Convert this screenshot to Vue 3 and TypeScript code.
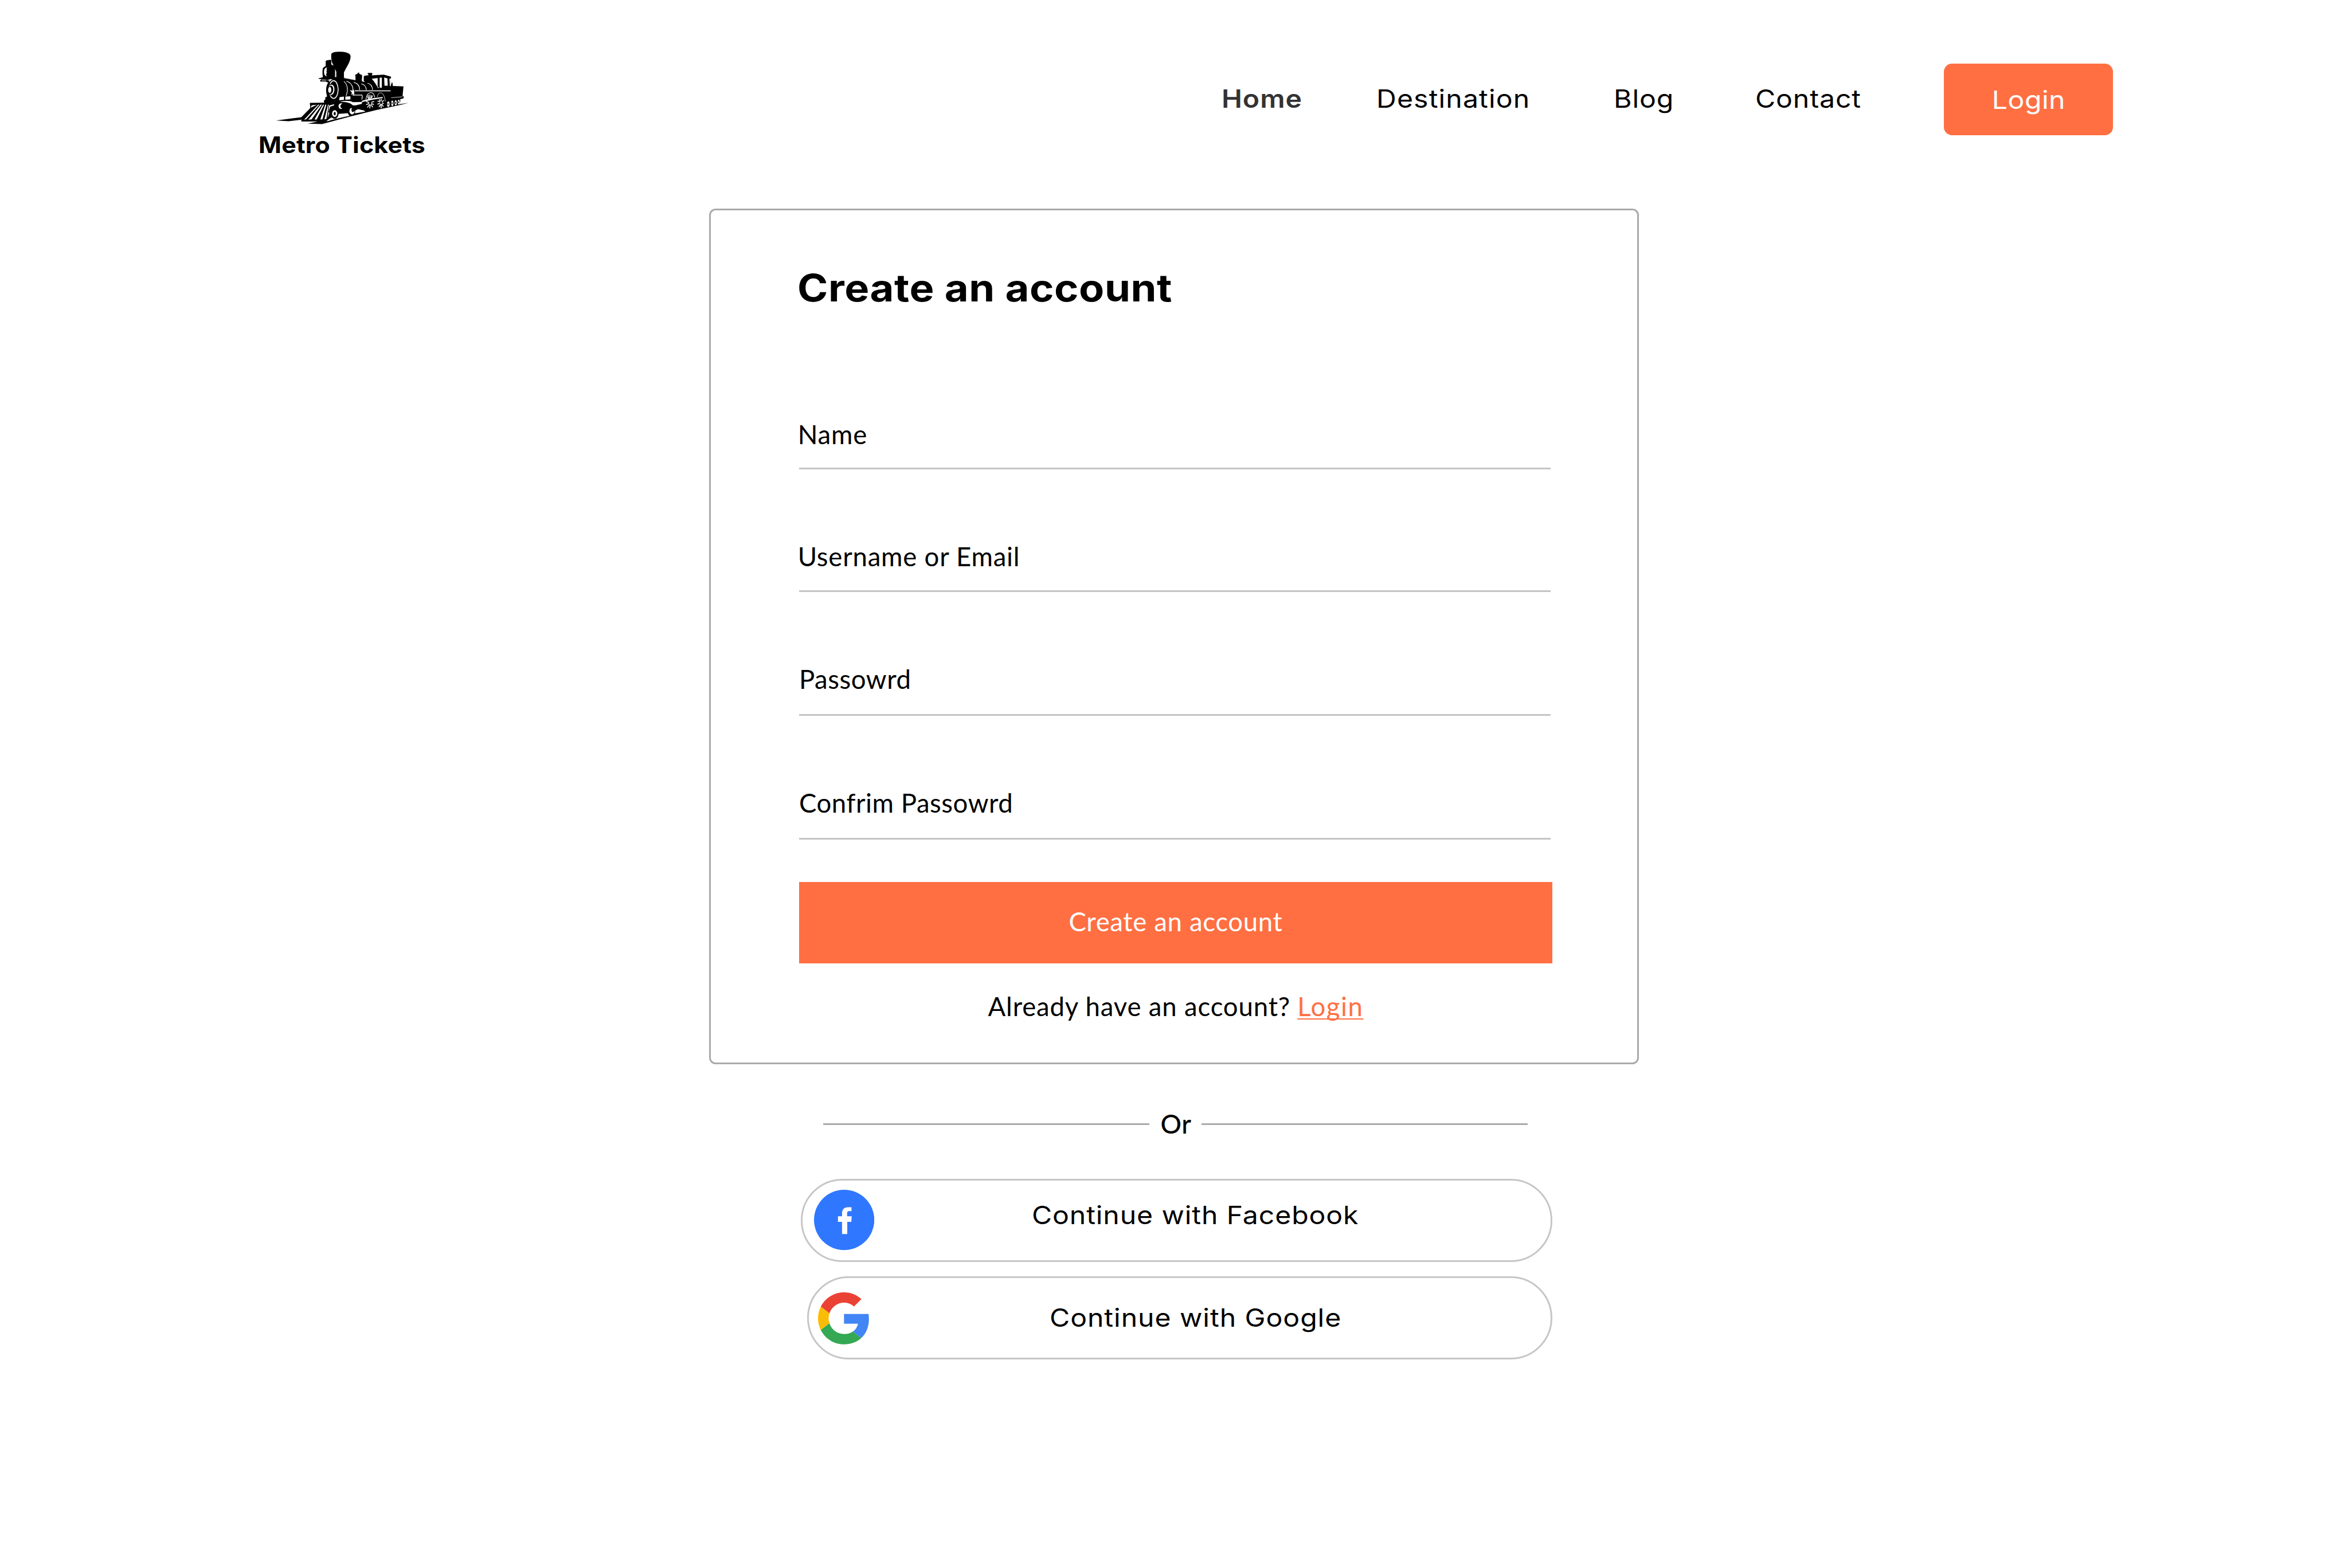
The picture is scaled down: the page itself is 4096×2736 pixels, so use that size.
<script setup lang="ts">
interface Field {
  id: string
  label: string
}

const links: string[] = ['Home', 'Destination', 'Blog', 'Contact']

const fields: Field[] = [
  { id: 'name', label: 'Name' },
  { id: 'username', label: 'Username or Email' },
  { id: 'password', label: 'Passowrd' },
  { id: 'confirm', label: 'Confrim Passowrd' },
]
</script>

<template>
  <div class="page">
    <header class="header">
      <div class="brand">
        <svg class="train" viewBox="140 40 745 415" aria-hidden="true">
          <!-- rails -->
          <path d="M145 428L292 409L284 424L215 432Z" />
          <path d="M320 446L380 433L430 432L640 372L760 350L880 330L835 342L700 370L560 405L400 448Z" />
          <!-- smokestack -->
          <path d="M451 62C452 51 470 47 503 47C540 48 557 58 558 72C558 96 548 112 526 152L521 162V195H478V156L455 106C451 92 450 76 451 62Z" />
          <!-- headlamp -->
          <path d="M420 99L426 95L448 92L451 96V118L462 123L472 132V190L404 194L402 160L404 138L420 126Z" />
          <path d="M474 155L478 158V190H474Z" fill="#fff" />
          <path d="M429 136C416 133 411 146 411 160C411 174 417 185 428 182C421 178 420 171 427 165C423 160 424 153 427 149C423 144 424 139 429 136Z" fill="#fff" />
          <path d="M381 194L402 189L480 188V200H440L438 220L420 212L390 212V204L396 202V199L381 197Z" />
          <path d="M398 202L424 203V206L398 206ZM430 203H440V206H430Z" fill="#fff" />
          <!-- boiler -->
          <path d="M470 190H521L585 203V180L582 178L588 172L596 170L598 163H605L607 170L619 175L622 180L620 209L634 212L631 208V184L637 180L657 177V173L653 171V165H678V172L675 178L742 174L782 185V194L778 196L781 236L786 218L790 219L792 237L851 239L846 292L852 295V305L832 311C836 322 832 337 824 341L700 365L660 380L640 374L600 366L585 372L580 395L560 404L545 398L543 388L490 392L480 412L466 419L452 412L440 420L430 334H412L410 318L418 312V300L428 295C418 262 422 232 436 216Z" />
          <!-- boiler front -->
          <ellipse cx="464" cy="257" rx="25" ry="49" fill="none" stroke="#fff" stroke-width="5" />
          <ellipse cx="451" cy="257" rx="19" ry="33" />
          <path d="M436 241C444 224 465 226 468 249C471 275 455 297 438 281C450 286 462 275 462 255C461 236 450 229 436 241Z" fill="#fff" />
          <path d="M436 247C445 235 451 246 451 258C451 271 444 281 436 271C433 264 433 254 436 247Z" fill="#fff" />
          <!-- boiler bands -->
          <g fill="none" stroke="#fff" stroke-width="3.6">
            <path d="M521 212C541 228 546 258 533 292" />
            <path d="M535 211C562 219 573 240 571 262" />
            <path d="M575 217C597 221 608 238 608 259" />
            <path d="M617 225C635 228 644 242 645 259" />
            <path d="M652 222C671 226 679 240 680 259" />
            <path d="M581 264H780" stroke-width="4.5" />
          </g>
          <path d="M521 190L585 202V205L521 193ZM622 209L635 212V215L622 212Z" fill="#fff" />
          <path d="M553 261L568 262L572 256L578 263V292L571 281L562 287L565 273Z" fill="#fff" />
          <!-- cab windows -->
          <path d="M675 197L706 193L708 194V239L716 248H710C702 232 691 214 675 197ZM719 192L731 190V247L719 246ZM744 190L762 195L764 235H746Z" fill="#fff" />
          <path d="M770 198L778 196L781 238H772Z" fill="#fff" />
          <path d="M768 196L773 197L776 243H768Z" />
          <!-- front beam and cylinders -->
          <path d="M497 299L521 296V314L495 316ZM529 296L557 294V312L529 313Z" fill="#fff" />
          <path d="M500 327C512 318 558 316 570 327L617 326L624 318L668 307L735 298L737 304L680 313L622 326L620 336L584 345L570 344C558 329 523 323 500 327Z" fill="#fff" />
          <path d="M568 287H621C626 295 622 302 620 311" fill="none" stroke="#fff" stroke-width="4" />
          <path d="M513 334C496 330 491 342 491 350C492 361 500 367 512 363C498 356 498 342 513 334Z" fill="#fff" />
          <!-- driving wheels -->
          <g fill="none" stroke="#fff">
            <path d="M643 312C650 263 687 262 692 301" stroke-width="3.5" />
            <path d="M706 298C711 263 745 264 750 323" stroke-width="2.5" />
            <path d="M665 308V284M658 309L650 294M674 304L680 290M670 306L674 287M661 308L656 287" stroke-width="4" />
            <path d="M661 330L644 322M661 335L644 340M664 339L651 356M667 341L664 361M671 339L681 355M672 334L687 340M672 328L688 323" stroke-width="5" />
            <path d="M722 327L707 320M722 333L707 338M725 338L715 354M728 338L727 361M731 336L739 352M732 330L742 335M732 325L742 317M727 321L728 309M722 322L716 311" stroke-width="5" />
            <path d="M783 302L846 297" stroke-width="2.5" />
          </g>
          <!-- tender wheels -->
          <g fill="#fff">
            <ellipse cx="767" cy="338" rx="7" ry="15" />
            <ellipse cx="789" cy="333" rx="6" ry="15" />
            <ellipse cx="808" cy="330" rx="6" ry="14" />
            <ellipse cx="825" cy="327" rx="6" ry="13" />
          </g>
          <ellipse cx="766" cy="338" rx="2.5" ry="6" />
          <ellipse cx="788" cy="333" rx="2.5" ry="6" />
          <ellipse cx="807" cy="330" rx="2.5" ry="6" />
          <ellipse cx="824" cy="327" rx="2.5" ry="6" />
          <!-- pilot -->
          <path d="M332 331L440 329L480 336L462 362L440 420L422 434H285V410L334 360V350Z" />
          <path d="M342 344L372 341L338 357V350L342 349Z" fill="#fff" />
          <path d="M379 340L385 341L312 421L300 424ZM392 340L399 341L342 422L324 424ZM405 340L411 341L370 423L358 423ZM418 340L424 341L402 422L390 423ZM433 340L437 341L424 420L413 422Z" fill="#fff" />
          <path d="M440 345L468 338L460 353L443 358L436 380L440 388L430 418Z" fill="#fff" />
          <path d="M444 352L462 346L458 400L444 402Z" />
          <ellipse cx="470" cy="389" rx="22" ry="30" />
          <ellipse cx="470" cy="390" rx="10" ry="14" fill="none" stroke="#fff" stroke-width="9" />
          <path d="M560 359C546 369 550 392 567 395C577 393 582 382 579 373C577 382 569 385 565 378C561 370 563 363 566 360Z" fill="#fff" />
          <path d="M482 412L543 391L552 402L482 418ZM588 388L597 372L634 374L640 379Z" fill="#fff" />
        </svg>
        <span class="brand-name wide">Metro Tickets</span>
      </div>

      <nav class="nav">
        <a v-for="link in links" :key="link" class="nav-link wide" :class="'nav-' + link.toLowerCase()">{{ link }}</a>
        <button class="login-btn" type="button"><span class="login-text">Login</span></button>
      </nav>
    </header>

    <main class="main">
      <section class="card">
        <h1 class="title wide">Create an account</h1>
        <div v-for="field in fields" :key="field.id" class="field" :class="'field-' + field.id">
          <label class="label">{{ field.label }}</label>
        </div>
        <button class="submit" type="button"><span>Create an account</span></button>
        <p class="signin"><span class="question">Already have an account?</span><a class="signin-link">Login</a></p>
      </section>

      <div class="divider">
        <i class="rule"></i>
        <span class="or">Or</span>
        <i class="rule"></i>
      </div>

      <div class="social">
        <button class="pill facebook" type="button">
          <svg class="fb-icon" viewBox="0 0 37 37" aria-hidden="true">
            <circle cx="18.5" cy="18.5" r="18.5" fill="#3077ff" />
            <path d="M17.2 27.2V19.7H14.7V16.3H17.2V14.4C17.2 12 18.6 10.7 20.7 10.7H23V13.1H21.5C20.7 13.1 20.3 13.6 20.3 14.3V16.3H23.1L22.9 19.7H20.4V27.2Z" fill="#fff" />
          </svg>
          <span class="pill-text wide">Continue with Facebook</span>
        </button>
        <button class="pill google" type="button">
          <svg class="g-icon" viewBox="0 0 48 48" aria-hidden="true">
            <path fill="#EA4335" d="M24 9.5c3.54 0 6.71 1.22 9.21 3.6l6.85-6.85C35.9 2.38 30.47 0 24 0 14.62 0 6.51 5.38 2.56 13.22l7.98 6.19C12.43 13.72 17.74 9.5 24 9.5z" />
            <path fill="#4285F4" d="M46.98 24.55c0-1.57-.15-3.09-.38-4.55H24v9.02h12.94c-.58 2.96-2.26 5.48-4.78 7.18l7.73 6c4.51-4.18 7.09-10.36 7.09-17.65z" />
            <path fill="#FBBC05" d="M10.53 28.59c-.48-1.45-.76-2.99-.76-4.59s.27-3.14.76-4.59l-7.98-6.19C.92 16.46 0 20.12 0 24c0 3.88.92 7.54 2.56 10.78l7.97-6.19z" />
            <path fill="#34A853" d="M24 48c6.48 0 11.93-2.13 15.89-5.81l-7.73-6c-2.15 1.45-4.92 2.3-8.16 2.3-6.26 0-11.57-4.22-13.47-9.91l-7.98 6.19C6.51 42.62 14.62 48 24 48z" />
          </svg>
          <span class="pill-text wide">Continue with Google</span>
        </button>
      </div>
    </main>
  </div>
</template>

<style>
/* 0.1rem is one unit of the 1440-unit wide layout grid */
html {
  font-size: 28.4444px;
}
body {
  margin: 0;
  background: #fff;
}
</style>

<style scoped>
.page {
  width: 144rem;
  height: 96.18rem;
  overflow: hidden;
  background: #fff;
  color: #000;
  font-family: Inter, "Open Sans", sans-serif;
  font-weight: 400;
  font-size: 1.54rem;
  line-height: 2rem;
}
button {
  border: 0;
  padding: 0;
  margin: 0;
  background: none;
  color: inherit;
  font: inherit;
  display: block;
  box-sizing: border-box;
  white-space: nowrap;
}
.wide {
  display: block;
  white-space: nowrap;
  transform: scaleX(1.1);
  transform-origin: left center;
}
.header {
  height: 12.8rem;
  display: flex;
  justify-content: space-between;
  box-sizing: border-box;
  padding: 3.11rem 14.4rem 0 15.8rem;
}
.brand {
  display: flex;
  flex-direction: column;
  width: 10.4rem;
}
.train {
  display: block;
  width: 8.246rem;
  height: 4.593rem;
  margin-left: 1.09rem;
}
.brand-name {
  margin: 0.22rem 0 0 0.05rem;
  font-size: 1.37rem;
  font-weight: 700;
  letter-spacing: 0.007rem;
}
.nav {
  display: grid;
  grid-template-columns: 9.5rem 14.55rem 8.7rem 11.55rem 10.4rem;
  align-items: start;
  margin-top: 0.79rem;
}
.nav-link {
  padding-top: 1.19rem;
}
.nav-home {
  font-weight: 600;
  color: #333;
  letter-spacing: 0.03rem;
}
.nav-destination {
  letter-spacing: 0.036rem;
}
.nav-blog {
  letter-spacing: 0.028rem;
}
.nav-contact {
  letter-spacing: 0.028rem;
}
.login-btn {
  height: 4.4rem;
  border-radius: 0.5rem;
  background: #ff6f42;
  color: #fff;
  text-align: center;
}
.login-text {
  display: block;
  padding-top: 0.16rem;
  letter-spacing: 0.015rem;
  transform: scaleX(1.1);
}
.main {
  display: flex;
  flex-direction: column;
  align-items: flex-start;
  padding-left: 43.5rem;
}
.card {
  width: 57rem;
  height: 52.5rem;
  box-sizing: border-box;
  border: 3px solid #aaa;
  border-radius: 0.4rem;
  padding: 3.17rem 5.2rem 0 5.4rem;
  font-family: Lato, sans-serif;
  font-size: 1.6rem;
  letter-spacing: 0.02rem;
}
.title {
  margin: 0 0 -0.02rem -0.1rem;
  font-family: Inter, sans-serif;
  font-size: 2.31rem;
  line-height: 3.2rem;
  font-weight: 700;
  letter-spacing: 0.018rem;
}
.field {
  display: flex;
  flex-direction: column;
  justify-content: flex-end;
  box-sizing: border-box;
  width: 46.1rem;
  height: 7.6rem;
  padding-bottom: 1.14rem;
  border-bottom: 3px solid #c4c4c4;
}
.field-name {
  height: 9.55rem;
  padding-bottom: 1.04rem;
}
.field-username {
  height: 7.5rem;
  padding-bottom: 1.04rem;
}
.label {
  white-space: nowrap;
}
.field-name .label,
.field-username .label {
  margin-left: -0.08rem;
  letter-spacing: 0.028rem;
}
.submit {
  width: 46.2rem;
  height: 5rem;
  margin-top: 2.6rem;
  padding-bottom: 0.08rem;
  background: #ff6f42;
  color: #fff;
  letter-spacing: 0.024rem;
}
.signin {
  display: flex;
  justify-content: center;
  margin: 1.66rem 0 0;
  width: 46.2rem;
  white-space: nowrap;
}
.question {
  letter-spacing: 0.03rem;
}
.signin-link {
  margin-left: 0.43rem;
  color: #ff6f42;
  letter-spacing: 0.055rem;
  text-decoration: underline;
  text-decoration-thickness: 0.08rem;
  text-underline-offset: 0.15rem;
  text-decoration-skip-ink: none;
}
.divider {
  display: grid;
  grid-template-columns: 20rem 3.2rem 20rem;
  align-items: center;
  margin: 2.65rem 0 0 7rem;
  height: 2rem;
}
.rule {
  border-top: 3px solid #aaa;
}
.or {
  text-align: center;
  font-family: Lato, sans-serif;
  font-weight: 500;
  font-size: 1.6rem;
  padding-left: 0.05rem;
  letter-spacing: 0.02rem;
}
.social {
  display: flex;
  flex-direction: column;
  align-items: flex-end;
  gap: 0.9rem;
  width: 46.1rem;
  margin: 2.35rem 0 0 5.6rem;
}
.pill {
  display: flex;
  align-items: center;
  height: 5.1rem;
  width: 100%;
  border: 3px solid #c6c6c6;
  border-radius: 2.55rem;
}
.facebook {
  padding-left: 0.7rem;
}
.google {
  width: 45.7rem;
  padding-left: 0.57rem;
}
.fb-icon {
  width: 3.7rem;
  height: 3.7rem;
}
.g-icon {
  width: 3.19rem;
  height: 3.19rem;
  margin-top: 0.08rem;
}
.facebook .pill-text {
  margin: -0.56rem 0 0 9.68rem;
  letter-spacing: 0.028rem;
}
.google .pill-text {
  margin: 0.04rem 0 0 11.01rem;
  letter-spacing: 0.03rem;
}
</style>
